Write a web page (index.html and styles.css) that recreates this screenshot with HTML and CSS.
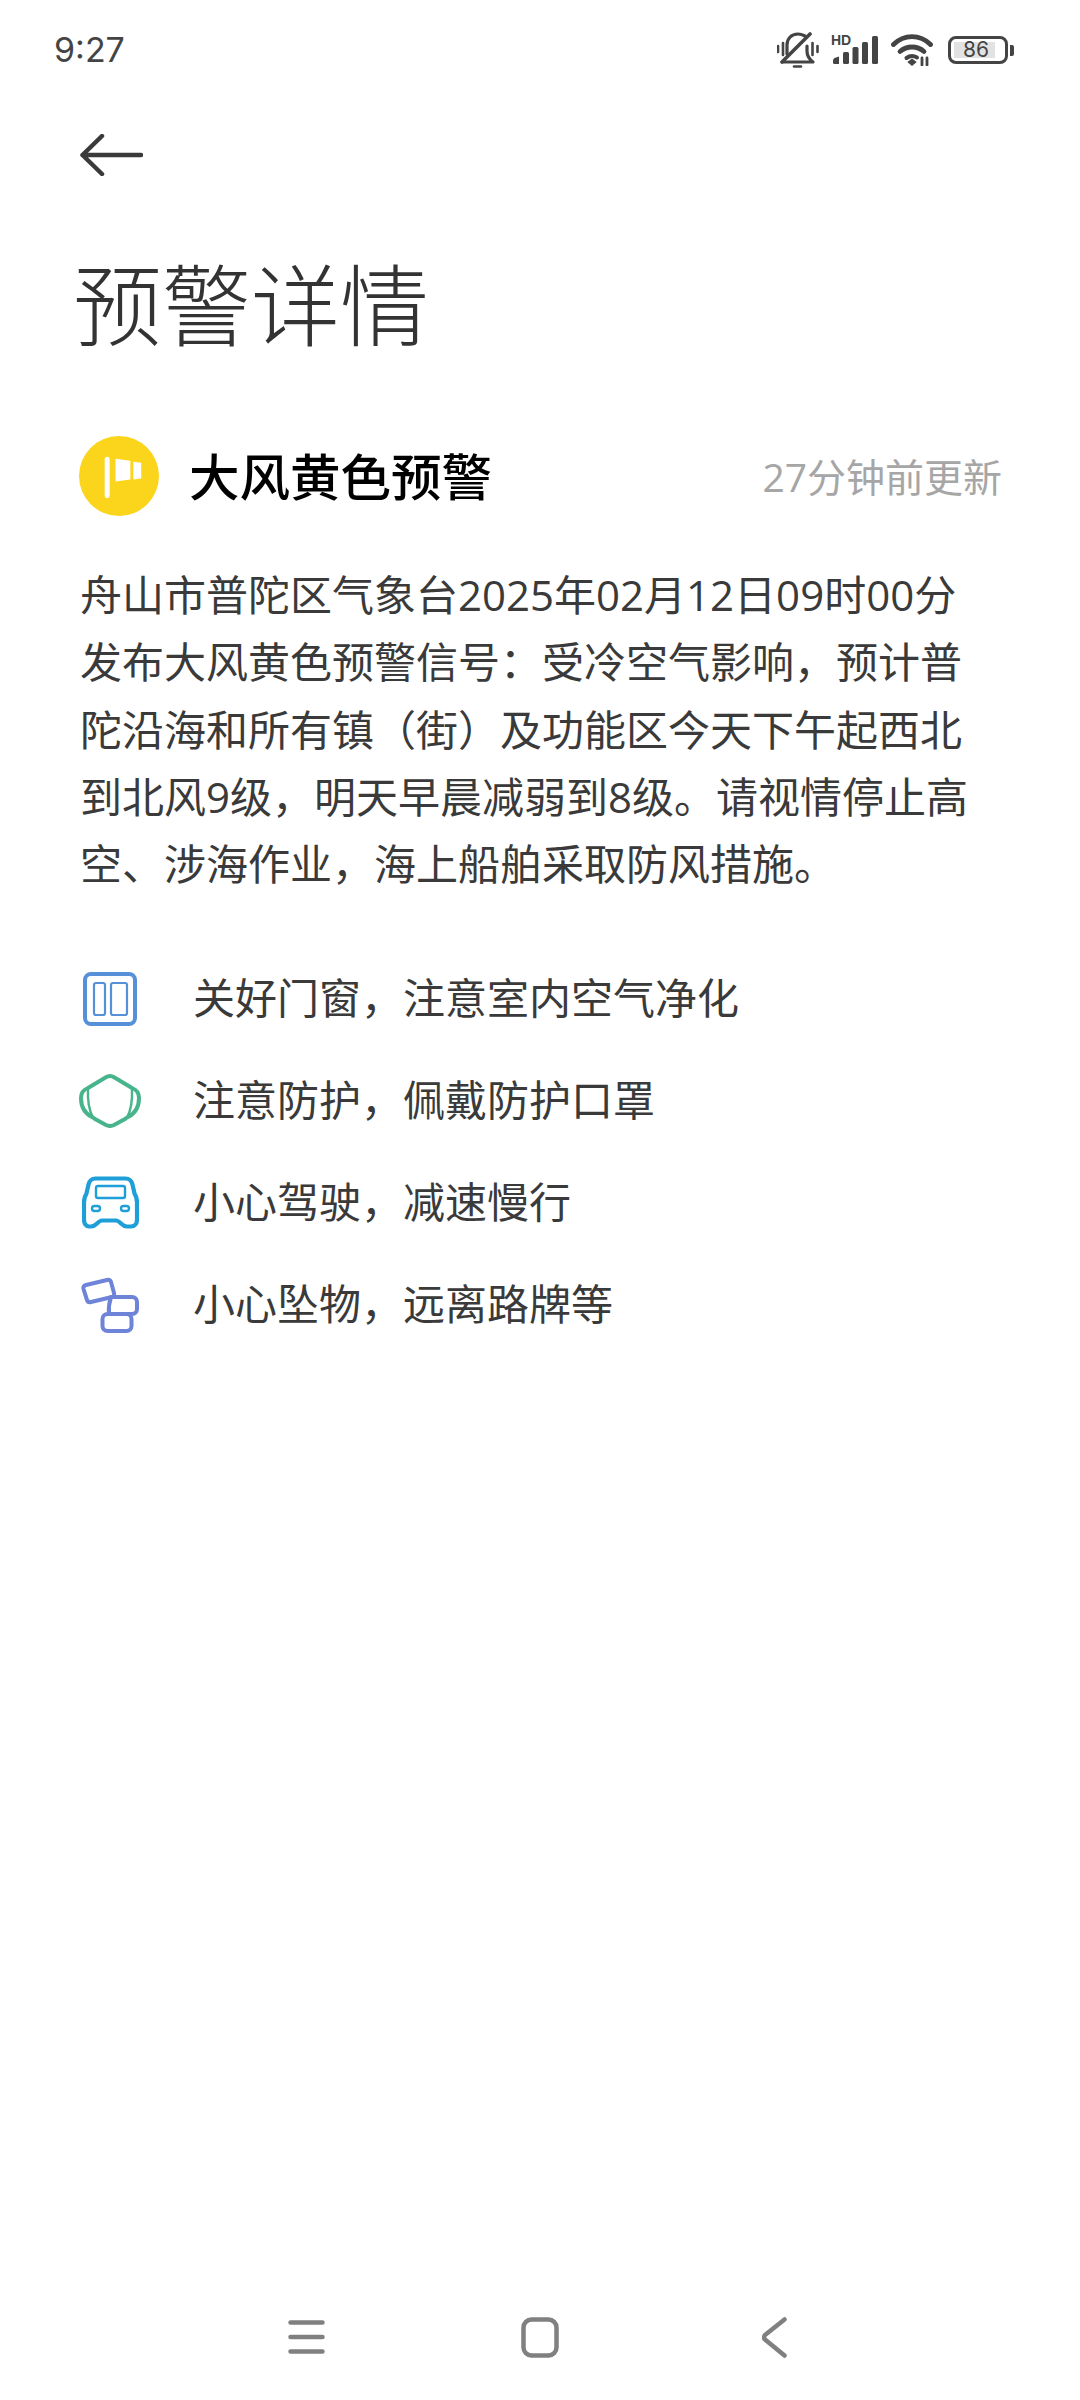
FILE: index.html
```html
<!DOCTYPE html>
<html lang="zh-CN">
<head>
  <meta charset="UTF-8" />
  <title>预警详情</title>
  <link rel="stylesheet" href="styles.css">
</head>
<body>
  <div class="status-bar">
    <span class="time">9:27</span>
    <div class="status-icons">
      <!-- 静音 -->
      <svg class="mute" width="42" height="36" viewBox="0 0 42 36" fill="none" stroke="#444" stroke-width="3.200" stroke-linecap="round" stroke-linejoin="round">
        <path d="M1 14v6M6 11v12M35.500 11v12M40.500 14v6" stroke-width="2.600"/>
        <path d="M10 22v-9c0-6 4-11 11-11 3 0 5 1 7 2"/>
        <path d="M30 14v5c0 5 2 8 6 11H6"/>
        <path d="M5 30L33 2" stroke-width="3.600"/>
        <path d="M17 34.500h7" stroke-width="2.600"/>
      </svg>
      <!-- HD 信号 -->
      <div class="signal">
        <span class="hd">HD</span>
        <svg width="46" height="28" viewBox="0 0 46 28" fill="#444">
          <path d="M1 24.500q0-1.500 1.500-2.500l4.500-1.500V28H2.500Q1 28 1 26.500z"/>
          <rect x="11" y="16" width="6" height="12" rx="1.500"/>
          <rect x="20.500" y="11" width="6" height="17" rx="1.500"/>
          <rect x="30" y="6" width="6" height="22" rx="1.500"/>
          <rect x="40" y="0" width="6" height="28" rx="1.500"/>
        </svg>
      </div>
      <!-- wifi -->
      <svg class="wifi" width="42" height="32" viewBox="0 0 42 32" fill="none" stroke="#444" stroke-width="4.800" stroke-linecap="round">
        <path d="M2.500 10.500C13 0 29 0 39.500 10.500"/>
        <path d="M9 17.500c7-6 17-6 24 0"/>
        <path d="M15.500 24c3.500-2.500 7-2.500 10.500-.5" stroke-width="4"/>
        <path d="M17.500 28l3.500-2.500 3.500 2.500-3.500 3z" fill="#444" stroke-width="1.500"/>
        <path d="M31 24v7M36 24v7" stroke-width="2.800"/>
      </svg>
      <!-- 电量 -->
      <div class="battery">
        <div class="battery-body">
          <div class="battery-fill"></div>
          <span class="battery-num">86</span>
        </div>
        <div class="battery-cap"></div>
      </div>
    </div>
  </div>

  <div class="nav">
    <svg width="63" height="42" viewBox="0 0 63 42" fill="none" stroke="#3a3a3a" stroke-width="4.500" stroke-linecap="round" stroke-linejoin="round">
      <path d="M22 2L2.500 21 22 40M2.500 21H61"/>
    </svg>
  </div>

  <h1 class="title">预警详情</h1>

  <div class="alert-head">
    <svg class="alert-icon" width="80" height="80" viewBox="0 0 81 81">
      <circle cx="40.500" cy="40.500" r="40.500" fill="#fbd41c"/>
      <rect x="26" y="21" width="5" height="42" rx="2.500" fill="#fff"/>
      <path d="M37 23l15 2v19l-15 2zM55 26l8 1v16l-8 1z" fill="#fff"/>
    </svg>
    <strong class="alert-name">大风黄色预警</strong>
    <span class="alert-time">27分钟前更新</span>
  </div>

  <p class="alert-desc">舟山市普陀区气象台2025年02月12日09时00分发布大风黄色预警信号：受冷空气影响，预计普陀沿海和所有镇（街）及功能区今天下午起西北到北风9级，明天早晨减弱到8级。请视情停止高空、涉海作业，海上船舶采取防风措施。</p>

  <div class="tips">
    <div class="tip">
      <div class="tip-icon">
        <svg width="54" height="54" viewBox="0 0 54 54" fill="none" stroke="#5590d8">
          <rect x="2" y="2" width="50" height="50" rx="6" stroke-width="4"/>
          <rect x="11" y="11" width="11" height="32" rx="2" stroke-width="2.200"/>
          <rect x="28" y="11" width="16" height="32" rx="2" stroke-width="2.200"/>
        </svg>
      </div>
      <span>关好门窗，注意室内空气净化</span>
    </div>
    <div class="tip">
      <div class="tip-icon">
        <svg width="62" height="54" viewBox="0 0 62 54" fill="none" stroke="#48b48c" stroke-linejoin="round" stroke-linecap="round">
          <path d="M31 2c1.500 0 3 .5 4.500 1.500L53 14c4 1.500 7 5 7 10 0 8-3 15-11 19-1 .5-2 1-3 2l-11 6c-3 1.500-5 1.500-8 0l-11-6c-1-1-2-1.500-3-2C5 39 2 32 2 24c0-5 3-8.500 7-10L26.500 3.500C28 2.500 29.500 2 31 2z" stroke-width="4"/>
          <path d="M9 15c-.5 10 .5 20 5 29M53 15c.5 10-.5 20-5 29" stroke-width="2.400"/>
        </svg>
      </div>
      <span>注意防护，佩戴防护口罩</span>
    </div>
    <div class="tip">
      <div class="tip-icon">
        <svg width="57" height="54" viewBox="0 0 57 54" fill="none" stroke="#1f9fd8">
          <path d="M13.500 2.500h30c4 0 6 2 7 6l2 9c2 3 2.500 5 2.500 9v17c0 4-2 7-6 7h-4c-3 0-4-1-6-3s-3-3-5-3H20c-2 0-3 1-5 3s-3 3-6 3H7c-3 0-5-3-5-7V26.500c0-4 .5-6 2.500-9l2-9c1-4 3-6 7-6z" stroke-width="4.200"/>
          <rect x="14" y="10" width="29" height="12" rx="2" stroke-width="2.400"/>
          <rect x="10" y="30" width="8" height="5" rx="2.500" stroke-width="2.400"/>
          <rect x="39" y="30" width="8" height="5" rx="2.500" stroke-width="2.400"/>
        </svg>
      </div>
      <span>小心驾驶，减速慢行</span>
    </div>
    <div class="tip">
      <div class="tip-icon">
        <svg width="58" height="56" viewBox="0 0 58 56" fill="none" stroke="#6e84d8" stroke-width="4" stroke-linejoin="round">
          <path d="M5 8l21-5c2-.5 3.500.5 4 2l3 11c.5 2 0 3.500-2 4L10 25c-2 .5-3.500-.5-4-2L2.500 12C2 10 3 8.500 5 8z"/>
          <path d="M30 20h21c3 0 5 2 5 5v7c0 3-2 5-5 5H28c-.5-5 0-11 2-17z"/>
          <rect x="21.500" y="37" width="29" height="17" rx="5"/>
        </svg>
      </div>
      <span>小心坠物，远离路牌等</span>
    </div>
  </div>

  <div class="spacer"></div>

  <div class="bottom-nav">
    <svg width="37" height="34" viewBox="0 0 37 34" stroke="#808080" stroke-width="4.500" stroke-linecap="round">
      <path d="M2.500 2.500h32M2.500 17h32M2.500 31.500h32"/>
    </svg>
    <svg class="nav-home" width="38" height="41" viewBox="0 0 38 41" fill="none" stroke="#808080" stroke-width="4.500">
      <rect x="2.500" y="2.500" width="33" height="36" rx="8"/>
    </svg>
    <svg width="25" height="41" viewBox="0 0 25 41" fill="none" stroke="#808080" stroke-width="4.500" stroke-linecap="round" stroke-linejoin="round">
      <path d="M22.500 2.500L3 18c-1.200 1.200-1.200 3.500 0 4.500l19.500 16"/>
    </svg>
  </div>
</body>
</html>
```

FILE: styles.css
```css
* {
  box-sizing: border-box;
}
html, body {
  height: 100%;
}
body {
  margin: 0;
  display: flex;
  flex-direction: column;
  background: #fff;
  color: #3a3a3a;
  font-family: "Open Sans", "Noto Sans CJK SC", sans-serif;
}
.status-bar {
  display: flex;
  justify-content: space-between;
  align-items: center;
  height: 100px;
  padding: 0 66px 0 54px;
}
.time {
  margin-bottom: 2px;
  font-family: Inter, sans-serif;
  font-size: 34px;
  color: #444;
}
.status-icons {
  display: flex;
  align-items: center;
  gap: 12px;
}
.mute {
  margin-right: 1px;
}
.signal {
  position: relative;
  display: flex;
}
.hd {
  position: absolute;
  left: -1px;
  top: -1px;
  font-family: "Liberation Sans", sans-serif;
  font-size: 14px;
  line-height: 11px;
  font-weight: bold;
  color: #444;
}
.wifi {
  margin-left: 1px;
}
.battery {
  display: flex;
  align-items: center;
  gap: 2px;
  margin-left: 3px;
}
.battery-body {
  position: relative;
  display: flex;
  align-items: center;
  width: 60px;
  height: 28px;
  border: 3px solid #444;
  border-radius: 8px;
  padding: 3px;
}
.battery-fill {
  width: 41px;
  height: 100%;
  background: #e2e2e2;
}
.battery-num {
  position: absolute;
  left: 0;
  right: 4px;
  text-align: center;
  font-family: Inter, sans-serif;
  font-size: 21px;
  line-height: 22px;
  color: #444;
}
.battery-cap {
  width: 4px;
  height: 11px;
  background: #444;
  border-radius: 0 2px 2px 0;
}
.nav {
  display: flex;
  padding: 34px 0 0 80px;
  height: 105px;
}
.title {
  margin: 37px 0 0 73px;
  font-size: 89px;
  line-height: 126px;
  font-weight: 300;
  color: #333;
}
.alert-head {
  display: flex;
  align-items: center;
  margin: 67px 78px 0 79px;
  height: 81px;
}
.alert-icon {
  margin-right: 30px;
}
.alert-name {
  margin-bottom: 4px;
  font-size: 50.500px;
  font-weight: 500;
  color: #000;
}
.alert-time {
  margin-left: auto;
  margin-bottom: 2px;
  font-size: 39px;
  color: #a6a6a6;
}
.alert-desc {
  width: 900px;
  margin: 45px 0 0 80px;
  font-size: 42px;
  line-height: 67.250px;
}
.tips {
  display: flex;
  flex-direction: column;
  margin: 47px 0 0 78px;
}
.tip {
  display: flex;
  align-items: center;
  height: 102px;
  font-size: 42px;
}
.tip-icon {
  display: flex;
  justify-content: center;
  width: 64px;
  margin-right: 51px;
  padding-top: 8px;
}
.spacer {
  flex: 1;
}
.bottom-nav {
  display: flex;
  justify-content: space-between;
  align-items: center;
  height: 120px;
  padding: 0 293px 6px 288px;
}
.nav-home {
  margin-right: 8px;
}
```
